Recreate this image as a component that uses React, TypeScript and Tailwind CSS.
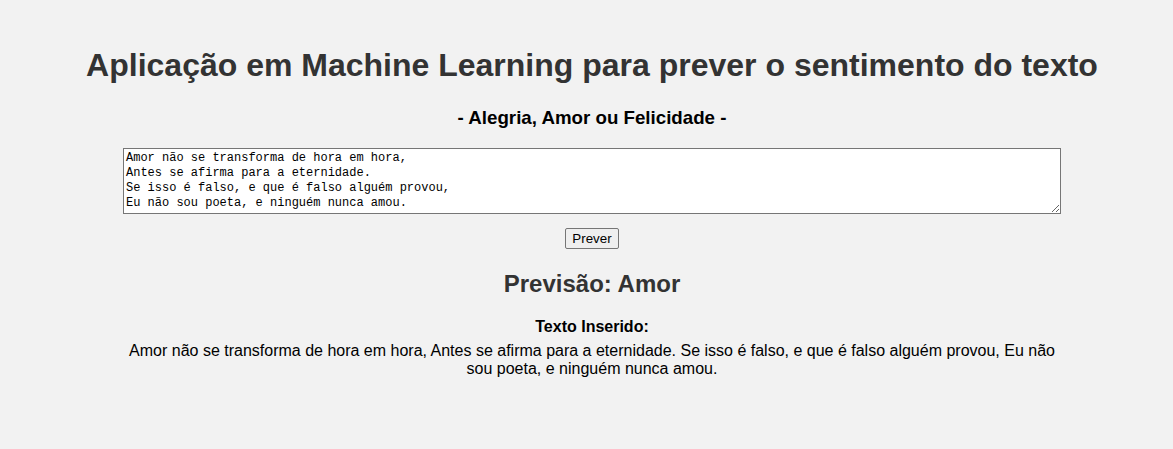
export default function App() {
  const poem =
    "Amor não se transforma de hora em hora,\nAntes se afirma para a eternidade.\nSe isso é falso, e que é falso alguém provou,\nEu não sou poeta, e ninguém nunca amou.";

  return (
    <div className="min-h-screen bg-[#f2f2f2] font-['Liberation_Sans',Arial,sans-serif] text-black">
      <div className="flex flex-col items-center pt-[47px] pl-[11px] text-center">
        {/* Header */}
        <h1 className="text-[32px] font-bold leading-[37px] text-[#333]">
          Aplicação em Machine Learning para prever o sentimento do texto
        </h1>
        <h3 className="mt-[23px] text-[18.72px] font-bold leading-[21px]">
          - Alegria, Amor ou Felicidade -
        </h3>

        {/* Form */}
        <form
          className="mt-[20px] flex w-full flex-col items-center"
          onSubmit={(e) => e.preventDefault()}
        >
          <textarea
            rows={4}
            defaultValue={poem}
            className="block h-[66px] w-[938px] resize-y border border-[#767676] bg-white px-[2px] py-[2px] font-['Liberation_Mono',monospace] text-[12px] leading-[15px] text-black"
          />
          <button
            type="submit"
            className="mt-[14px] h-[21px] rounded-[2px] border border-[#767676] bg-[#efefef] px-[6px] text-[13.33px] leading-[15px] text-black"
          >
            Prever
          </button>
        </form>

        {/* Result */}
        <h2 className="mt-[21px] text-[24px] font-bold leading-[28px] text-[#333]">
          Previsão: Amor
        </h2>
        <p className="mt-[20px] text-[16px] font-bold leading-[18px]">Texto Inserido:</p>
        <p className="mt-[6px] w-[938px] text-[16px] leading-[18px]">
          Amor não se transforma de hora em hora, Antes se afirma para a eternidade. Se isso é
          falso, e que é falso alguém provou, Eu não sou poeta, e ninguém nunca amou.
        </p>
      </div>
    </div>
  );
}
